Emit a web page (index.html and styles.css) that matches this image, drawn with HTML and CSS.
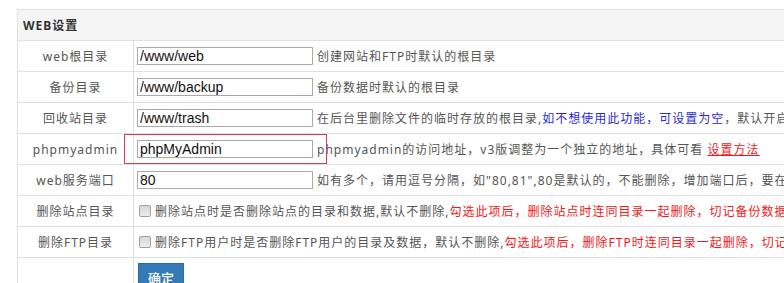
FILE: index.html
```html
<!DOCTYPE html>
<html lang="zh-CN">
<head>
<meta charset="utf-8">
<title>WEB设置</title>
<link rel="stylesheet" href="styles.css">
</head>
<body>
<div class="page">
  <table class="settings">
    <thead>
      <tr><th colspan="2" class="head">WEB设置</th></tr>
    </thead>
    <tbody>
      <tr>
        <td class="label">web根目录</td>
        <td class="value"><input class="field" type="text" value="/www/web"><span class="desc">创建网站和FTP时默认的根目录</span></td>
      </tr>
      <tr>
        <td class="label">备份目录</td>
        <td class="value"><input class="field" type="text" value="/www/backup"><span class="desc">备份数据时默认的根目录</span></td>
      </tr>
      <tr>
        <td class="label">回收站目录</td>
        <td class="value"><input class="field" type="text" value="/www/trash"><span class="desc">在后台里删除文件的临时存放的根目录,<span class="blue">如不想使用此功能，可设置为空</span>，默认开启</span></td>
      </tr>
      <tr>
        <td class="label">phpmyadmin</td>
        <td class="value"><input class="field" type="text" value="phpMyAdmin"><span class="desc">phpmyadmin的访问地址，v3版调整为一个独立的地址，具体可看 <a class="redlink" href="#">设置方法</a></span></td>
      </tr>
      <tr>
        <td class="label">web服务端口</td>
        <td class="value"><input class="field" type="text" value="80"><span class="desc">如有多个，请用逗号分隔，如"80,81",80是默认的，不能删除，增加端口后，要在</span></td>
      </tr>
      <tr>
        <td class="label">删除站点目录</td>
        <td class="value"><input class="check" type="checkbox"><span class="desc">删除站点时是否删除站点的目录和数据,默认不删除,<span class="red">勾选此项后，删除站点时连同目录一起删除，切记备份数据</span></span></td>
      </tr>
      <tr>
        <td class="label">删除FTP目录</td>
        <td class="value"><input class="check" type="checkbox"><span class="desc">删除FTP用户时是否删除FTP用户的目录及数据，默认不删除,<span class="red">勾选此项后，删除FTP时连同目录一起删除，切记</span></span></td>
      </tr>
      <tr>
        <td class="label"></td>
        <td class="value btn-cell"><button class="btn" type="button">确定</button></td>
      </tr>
    </tbody>
  </table>
  <div class="annotation"></div>
</div>
</body>
</html>
```
FILE: styles.css
```css
html, body {
  margin: 0;
  padding: 0;
  background: #fff;
  overflow: hidden;
}
.page {
  padding: 9px 0 0 17px;
  width: 1200px;
}
.settings {
  border-collapse: collapse;
  width: 1100px;
  font-family: "Noto Sans", "Noto Sans CJK SC", sans-serif;
  font-size: 12px;
  letter-spacing: 1px;
  color: #555;
}
.settings th,
.settings td {
  border: 1px solid #e0e0e0;
  height: 30px;
  padding: 0;
  white-space: nowrap;
}
.head {
  background: #f5f5f5;
  text-align: left;
  padding-left: 5px !important;
  font-weight: bold;
  color: #333;
}
.label {
  width: 115px;
  text-align: center;
}
.value {
  padding-left: 3px !important;
}
.field {
  box-sizing: border-box;
  width: 176px;
  height: 18px;
  border: 1px solid #a9a9a9;
  padding: 0 2px;
  margin: 0;
  font-family: "Liberation Sans", Arial, sans-serif;
  font-size: 14px;
  letter-spacing: 0;
  color: #111;
  vertical-align: middle;
}
.desc {
  margin-left: 4px;
  vertical-align: middle;
}
.blue {
  color: #2a2ad0;
}
.red {
  color: #f01818;
}
.redlink {
  color: #f01818;
  text-decoration: underline;
}
.check {
  appearance: none;
  -webkit-appearance: none;
  box-sizing: border-box;
  width: 12px;
  height: 12px;
  margin: 0 0 0 2px;
  border: 1px solid #a0a0a0;
  border-radius: 2px;
  background: linear-gradient(#d6d6d6, #eeeeee);
  vertical-align: middle;
}
.btn-cell {
  vertical-align: top;
  padding-top: 5px !important;
  height: 40px !important;
}
.btn {
  margin: 0 0 0 1px;
  width: 46px;
  height: 28px;
  border: 1px solid #2e6da4;
  background: #337ab7;
  color: #fff;
  font-family: "Noto Sans CJK SC", sans-serif;
  font-size: 13px;
  font-weight: 500;
  letter-spacing: 0;
  padding: 0;
}
.annotation {
  position: absolute;
  left: 124px;
  top: 134px;
  width: 201px;
  height: 28px;
  border: 1px solid #d63c4a;
}
```
